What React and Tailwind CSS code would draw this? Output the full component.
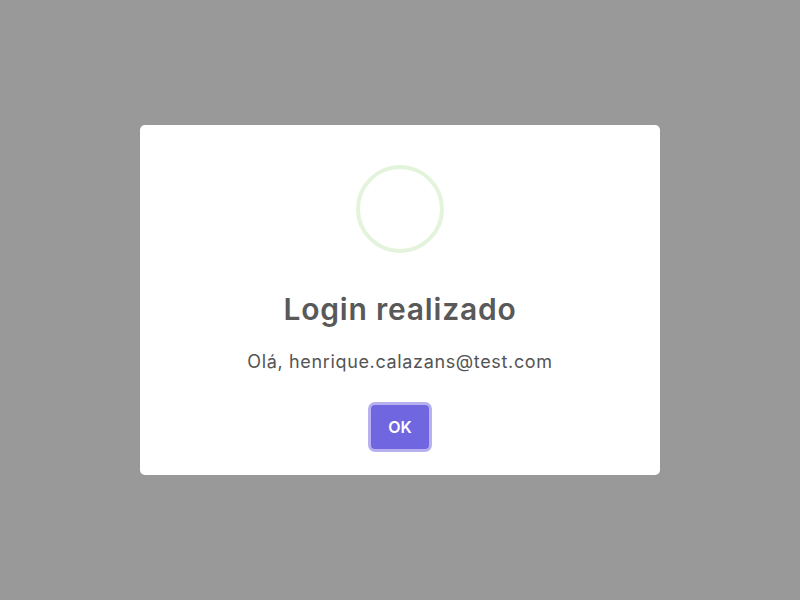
import React from 'react';

export default function App() {
    return (
        <div className="w-[800px] h-[600px] bg-[#999999] flex items-center justify-center" style={{ fontFamily: 'Inter, "Noto Sans", sans-serif' }}>
            <div className="w-[520px] h-[350px] bg-white rounded-[5px] flex flex-col items-center pb-5">
                {/* success icon ring */}
                <div className="mt-10 w-[88px] h-[88px] rounded-full border-4 border-[#e4f4dc] shrink-0"></div>

                <h2 className="mt-[9.6px] pt-6 text-[30px] leading-[45px] font-semibold tracking-[0.8px] text-[#595959] text-center">
                    Login realizado
                </h2>

                <div className="mt-4 mb-[5.4px] text-[18px] leading-[27px] tracking-[0.65px] text-[#545454] text-center">
                    Olá, henrique.calazans@test.com
                </div>

                <div className="mt-5 flex justify-center">
                    <button className="m-[5px] w-[58px] h-[44px] rounded bg-[#7066e0] text-white text-base leading-6 font-semibold shadow-[0_0_0_3px_rgba(112,102,224,0.5)]">
                        OK
                    </button>
                </div>
            </div>
        </div>
    );
}
